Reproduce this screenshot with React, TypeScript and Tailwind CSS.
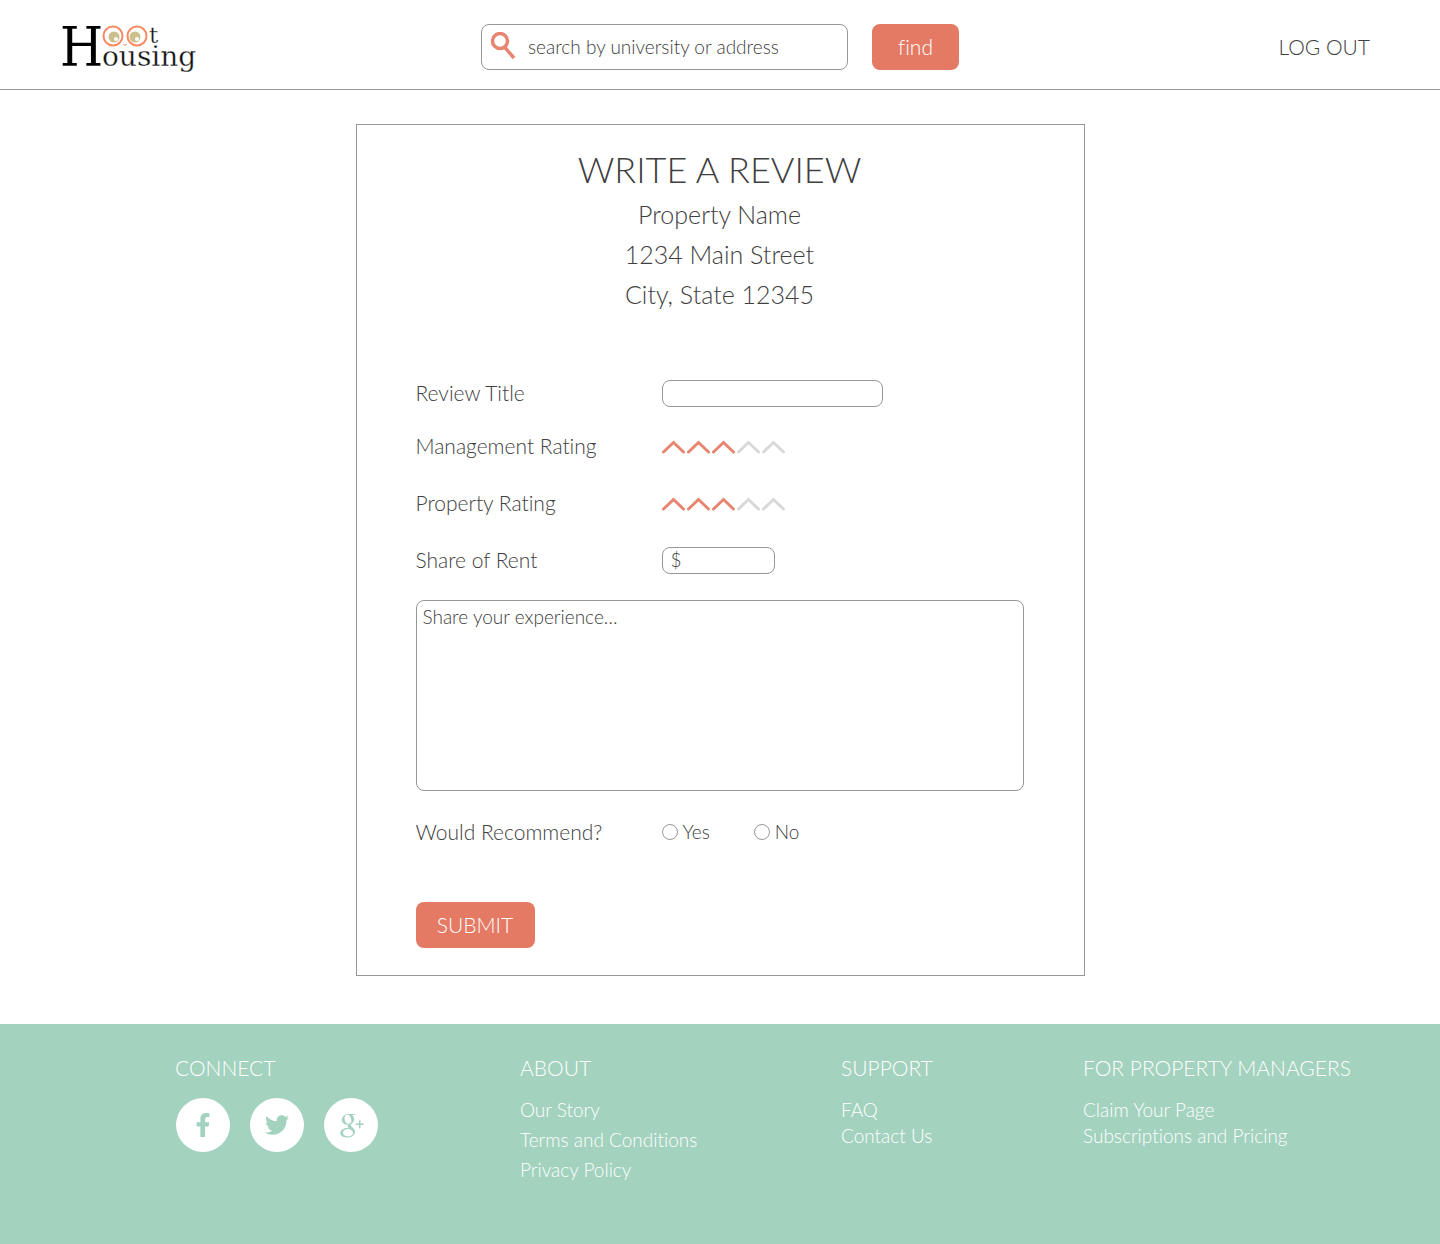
import { useState } from "react";
import { FaFacebookF, FaTwitter } from "react-icons/fa";
import { TiSocialGooglePlus } from "react-icons/ti";

function Logo() {
  return (
    <svg width="148" height="72" viewBox="-4 -13 148 72" role="img" aria-label="Hoot Housing">
      <text
        x="-2"
        y="42"
        fontSize="55"
        fontFamily="'DejaVu Serif Condensed', 'DejaVu Serif', serif"
        fill="#000"
      >
        H
      </text>
      <g fontFamily="'DejaVu Serif', serif" fill="#111" stroke="#fff" strokeWidth="0.300">
        <text x="40" y="42" fontSize="28">ousing</text>
        <text x="87" y="19" fontSize="23">t</text>
      </g>
      <circle cx="51" cy="12" r="9.5" fill="#fff" stroke="#f98a62" strokeWidth="2" />
      <circle cx="75" cy="12" r="9.5" fill="#fff" stroke="#f98a62" strokeWidth="2" />
      <circle cx="52" cy="13" r="5.5" fill="#cbc08c" />
      <circle cx="73" cy="13" r="5.5" fill="#cbc08c" />
      <circle cx="54" cy="15" r="2" fill="#fff" />
      <circle cx="75" cy="15" r="2" fill="#fff" />
      <path d="M61 20l2 1.500 2-1.500" fill="none" stroke="#f98a62" />
    </svg>
  );
}

function Rating({ label, name }: { label: string; name: string }) {
  const [value, setValue] = useState(3);
  return (
    <fieldset className="flex h-7 items-center">
      <legend className="float-left w-[246px] text-[21px]/[26px]">{label}</legend>
      <div className="flex gap-px">
        {[1, 2, 3, 4, 5].map((n) => (
          <label key={n} className="cursor-pointer">
            <input
              type="radio"
              name={name}
              className="peer sr-only"
              aria-label={`${n} of 5`}
              checked={value === n}
              onChange={() => setValue(n)}
            />
            <svg
              width="24"
              height="16"
              viewBox="0 0 24 16"
              fill="none"
              strokeWidth="3"
              strokeLinecap="round"
              className={n <= value ? "stroke-[#e88570]" : "stroke-[#d8d8d8]"}
            >
              <path d="M1.500 14 11.500 4.500 21.500 14" />
            </svg>
          </label>
        ))}
      </div>
    </fieldset>
  );
}

const fieldBorder = "rounded-lg border border-[#979797] bg-white outline-none focus:border-[#e47a64]";

function ReviewForm() {
  return (
    <form className="mt-[65px]" onSubmit={(e) => e.preventDefault()}>
      <div className="flex h-7 items-center">
        <label htmlFor="title" className="w-[246px] text-[21px]/[26px]">Review Title</label>
        <input id="title" type="text" className={`${fieldBorder} h-[27px] w-[221px] px-2 text-[19px]`} />
      </div>
      <div className="mt-[25px]">
        <Rating label="Management Rating" name="management" />
      </div>
      <div className="mt-[29px]">
        <Rating label="Property Rating" name="property" />
      </div>
      <div className="mt-[29px] flex h-7 items-center">
        <label htmlFor="rent" className="w-[246px] text-[21px]/[26px]">Share of Rent</label>
        <div className={`${fieldBorder} flex h-[27px] w-[113px] items-center gap-1 px-2 text-[19px]`}>
          <span>$</span>
          <input id="rent" type="text" inputMode="decimal" className="w-full min-w-0 outline-none" />
        </div>
      </div>
      <textarea
        aria-label="Share your experience"
        placeholder="Share your experience…"
        className={`${fieldBorder} mt-[26px] block h-[191px] w-full resize-none px-1.5 py-1 text-[19px]/6 placeholder:text-[#404040] placeholder:opacity-100`}
      />
      <fieldset className="mt-[27px] flex h-7 items-center">
        <legend className="float-left w-[246px] text-[21px]/[26px]">Would Recommend?</legend>
        <div className="flex gap-11 text-[19px]/[26px]">
          {["Yes", "No"].map((answer) => (
            <label key={answer} className="flex items-center gap-[5px]">
              <input
                type="radio"
                name="recommend"
                value={answer}
                className="size-4 appearance-none rounded-full border border-[#979797] checked:border-[5px] checked:border-[#e47a64]"
              />
              {answer}
            </label>
          ))}
        </div>
      </fieldset>
      <button type="submit" className="mt-14 h-[46px] w-[119px] rounded-lg bg-[#e47a64] text-[21px]/[26px] text-white">
        SUBMIT
      </button>
    </form>
  );
}

const social = [
  { name: "Facebook", icon: <FaFacebookF size={24} /> },
  { name: "Twitter", icon: <FaTwitter size={24} /> },
  { name: "Google Plus", icon: <TiSocialGooglePlus size={38} /> },
];

function LinkColumn({ title, links, listClass }: { title: string; links: string[]; listClass: string }) {
  return (
    <nav aria-label={title}>
      <h2 className="text-[21px]/7">{title}</h2>
      <ul className={listClass}>
        {links.map((link) => (
          <li key={link}>
            <a href="#">{link}</a>
          </li>
        ))}
      </ul>
    </nav>
  );
}

export default function App() {
  return (
    <div className="flex min-h-screen flex-col bg-white font-['Lato',sans-serif] font-light text-[#404040] [font-variant-ligatures:none]">
      <header className="grid h-[90px] grid-cols-[1fr_auto_1fr] items-center border-b border-[#979797] pt-[5px]">
        <a href="#" className="justify-self-start pl-[58px]">
          <Logo />
        </a>
        <form className="flex gap-6" role="search" onSubmit={(e) => e.preventDefault()}>
          <label className={`${fieldBorder} flex h-[46px] w-[367px] items-center gap-3 pr-3 pl-2`}>
            <svg width="26" height="30" viewBox="0 0 26 30" fill="none" stroke="#e88570" className="shrink-0">
              <circle cx="10" cy="9" r="7.500" strokeWidth="3.500" />
              <path d="M14.500 15 24 26" strokeWidth="3.500" />
            </svg>
            <input
              type="search"
              aria-label="Search"
              placeholder="search by university or address"
              className="w-full text-[19px] outline-none placeholder:text-[#404040] placeholder:opacity-100"
            />
          </label>
          <button type="submit" className="h-[46px] w-[87px] rounded-lg bg-[#e47a64] text-[21px] text-white">
            find
          </button>
        </form>
        <a href="#" className="justify-self-end pr-[70px] text-[21px]">LOG OUT</a>
      </header>

      <main className="mx-auto mt-[34px] mb-12 w-full max-w-[729px] border border-[#979797] pt-[19px] pr-[60px] pb-[27px] pl-[59px]">
        <h1 className="text-center text-4xl/[50px]">WRITE A REVIEW</h1>
        <p className="text-center text-[25px]/10">
          Property Name
          <br />
          1234 Main Street
          <br />
          City, State 12345
        </p>
        <ReviewForm />
      </main>

      <footer className="grid grow grid-cols-[345fr_321fr_242fr_357fr] bg-[#a3d2be] pt-[30px] pb-14 pl-[175px] text-white">
        <section aria-label="Connect">
          <h2 className="text-[21px]/7">CONNECT</h2>
          <div className="mt-4 flex gap-5 pl-px">
            {social.map(({ name, icon }) => (
              <a
                key={name}
                href="#"
                aria-label={name}
                className="flex size-[54px] items-center justify-center rounded-full bg-white text-[#a3d2be]"
              >
                {icon}
              </a>
            ))}
          </div>
        </section>
        <LinkColumn
          title="ABOUT"
          links={["Our Story", "Terms and Conditions", "Privacy Policy"]}
          listClass="mt-[13px] text-[19px]/[30px]"
        />
        <LinkColumn title="SUPPORT" links={["FAQ", "Contact Us"]} listClass="mt-[15px] text-[19px]/[26px]" />
        <LinkColumn
          title="FOR PROPERTY MANAGERS"
          links={["Claim Your Page", "Subscriptions and Pricing"]}
          listClass="mt-[15px] text-[19px]/[26px]"
        />
      </footer>
    </div>
  );
}
